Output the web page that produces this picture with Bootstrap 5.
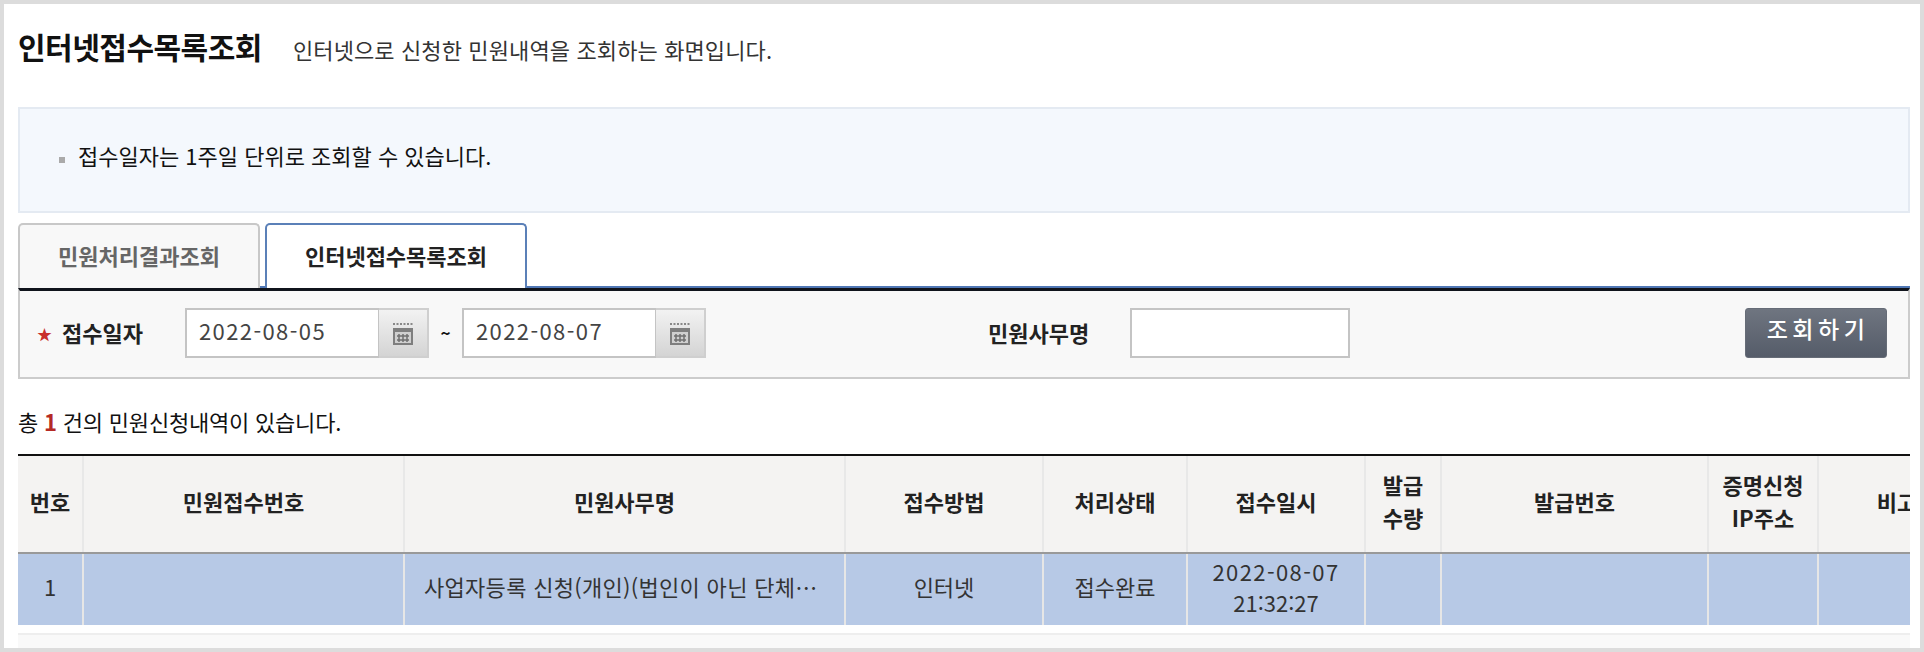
<!DOCTYPE html>
<html lang="ko">
<head>
    <meta charset="UTF-8">
    <title>인터넷접수목록조회</title>
    <link href="https://cdn.jsdelivr.net/npm/bootstrap@5.3.0/dist/css/bootstrap.min.css" rel="stylesheet">
    <style>
        html, body { height: 100%; }
        body {
            background: #fff;
            font-family: "Noto Sans CJK KR", "Noto Sans", sans-serif;
            color: #222;
            overflow: hidden;
        }
        .frame {
            height: 652px;
            border: 4px solid #dcdcdc;
            padding: 0 10px 0 14px;
            overflow: hidden;
        }
        .page-head { height: 103px; padding-top: 22px; }
        .page-title { font-size: 30px; font-weight: 700; letter-spacing: -0.5px; color: #111; margin: 0 31px 0 0; line-height: 40px; }
        .page-desc { font-size: 22px; letter-spacing: 0.12px; color: #333; }
        .notice {
            height: 106px;
            background: #f4f8fd;
            border: 2px solid #e4eaf2;
            padding: 0 0 9px 39px;
            font-size: 22px;
            color: #111;
        }
        .notice-dot { width: 6px; height: 6px; background: #aaa; margin: 8px 13px 0 0; }
        .tab-bar { margin-top: 10px; height: 65px; gap: 5px; border-bottom: 2px solid #4f77b5; }
        .tab-bar .nav-link {
            width: 242px; height: 65px; padding: 0 0 3px;
            display: flex; align-items: center; justify-content: center;
            background: #f8f8f8;
            border: 2px solid #c8c8c8;
            border-bottom: 0;
            border-radius: 5px 5px 0 0;
            font-size: 22px; font-weight: 700;
            color: #666;
        }
        .tab-bar .nav-link.active {
            width: 262px;
            background: #fff;
            border-color: #5b80b8;
            color: #222;
        }
        .search-box {
            height: 91px;
            background: #f8f8f8;
            border: 2px solid #ccc;
            border-top: 3px solid #10141c;
            padding: 0 21px 2px 17px;
        }
        .req-star { color: #c9302c; font-size: 15px; width: 23px; padding-right: 8px; text-align: right; line-height: 1; }
        .search-label { font-size: 22px; font-weight: 700; color: #222; padding-bottom: 2px; }
        .date-label { width: 125px; padding-left: 2px; }
        .name-label { margin-left: 282px; width: 142px; }
        .date-input.form-control, .name-input.form-control {
            height: 50px; border: 2px solid #c4c4c4; border-radius: 0;
            font-family: "Noto Sans CJK KR", sans-serif;
            font-size: 22px; letter-spacing: 1.4px; color: #444; padding: 0 12px 6px; background: #fff;
        }
        .date-input.form-control { width: 194px; border-right-width: 1px; }
        .name-input.form-control { width: 220px; }
        .cal-btn.btn {
            width: 50px; height: 50px; padding: 0;
            border: 2px solid #cfcfcf; border-left: 0; border-radius: 0;
            background: linear-gradient(#f2f2f2, #d4d4d4);
        }
        .tilde { width: 33px; text-align: center; font-size: 17px; font-weight: 700; color: #111; }
        .search-btn.btn {
            width: 142px; height: 50px; padding: 0 0 10px 4px;
            background: linear-gradient(#6f7580, #555c69);
            border: 1px solid #666c77; border-radius: 3px;
            color: #fff; font-size: 23px; font-weight: 500; letter-spacing: 4.5px;
        }
        .total-line { margin: 25px 0 16px; height: 34px; line-height: 34px; font-size: 22px; letter-spacing: -0.2px; color: #111; }
        .total-line b { color: #b52a25; }
        .grid-wrap { overflow: hidden; border-top: 2px solid #111; }
        .grid-table.table { table-layout: fixed; width: 1958px; margin: 0; font-size: 22px; }
        .grid-table.table th, .grid-table.table td {
            text-align: center; vertical-align: middle; padding: 0 0 6px;
        }
        .grid-table.table th {
            height: 97px; line-height: 33px;
            background: #f4f3f2; color: #222; font-weight: 700;
            border: 0; border-right: 2px solid #e8e8e8; border-bottom: 2px solid #999;
        }
        .grid-table.table td {
            height: 72px; line-height: 31px;
            background: #b7c9e6; color: #333;
            border: 0; border-right: 2px solid #e6e6e6;
            box-shadow: none;
        }
        .grid-table.table td.subject { text-align: left; padding: 0 0 6px 19px; letter-spacing: 0.3px; white-space: nowrap; overflow: hidden; }
        .date-part { letter-spacing: 1.4px; }
        .scroll-strip { margin-top: 8px; height: 16px; background: #f9f9f9; border-top: 2px solid #eee; }
    </style>
</head>
<body>
<div class="frame">
    <!-- 제목 -->
    <div class="page-head d-flex align-items-baseline">
        <h1 class="page-title">인터넷접수목록조회</h1>
        <span class="page-desc">인터넷으로 신청한 민원내역을 조회하는 화면입니다.</span>
    </div>

    <!-- 안내 -->
    <div class="notice d-flex align-items-center">
        <span class="notice-dot"></span>
        <span>접수일자는 1주일 단위로 조회할 수 있습니다.</span>
    </div>

    <!-- 탭 -->
    <ul class="nav tab-bar">
        <li class="nav-item"><a class="nav-link" href="#">민원처리결과조회</a></li>
        <li class="nav-item"><a class="nav-link active" href="#">인터넷접수목록조회</a></li>
    </ul>

    <!-- 검색 -->
    <form class="search-box d-flex align-items-center">
        <span class="req-star">★</span>
        <label class="search-label date-label">접수일자</label>
        <input class="form-control date-input" type="text" value="2022-08-05">
        <button type="button" class="btn cal-btn" aria-label="달력">
            <svg width="24" height="24" viewBox="0 0 24 24"><path d="M2 2h2M5.500 2h2M9 2h2M12.500 2h2M16 2h2M19.500 2h2" stroke="#888" stroke-width="2"/><rect x="2" y="6" width="20" height="17" fill="#7e7e7e"/><rect x="4" y="10" width="16" height="11" fill="#cfcfcf"/><path d="M6 14h12M6 18h12M8 12v8M12 12v8M16 12v8" stroke="#707070" stroke-width="1.500"/></svg>
        </button>
        <span class="tilde">~</span>
        <input class="form-control date-input" type="text" value="2022-08-07">
        <button type="button" class="btn cal-btn" aria-label="달력">
            <svg width="24" height="24" viewBox="0 0 24 24"><path d="M2 2h2M5.500 2h2M9 2h2M12.500 2h2M16 2h2M19.500 2h2" stroke="#888" stroke-width="2"/><rect x="2" y="6" width="20" height="17" fill="#7e7e7e"/><rect x="4" y="10" width="16" height="11" fill="#cfcfcf"/><path d="M6 14h12M6 18h12M8 12v8M12 12v8M16 12v8" stroke="#707070" stroke-width="1.500"/></svg>
        </button>
        <label class="search-label name-label">민원사무명</label>
        <input class="form-control name-input" type="text">
        <button type="button" class="btn search-btn ms-auto">조회하기</button>
    </form>

    <p class="total-line">총 <b>1</b> 건의 민원신청내역이 있습니다.</p>

    <!-- 목록 -->
    <div class="grid-wrap">
        <table class="table grid-table">
            <colgroup id="gridCols"></colgroup>
            <thead>
            <tr>
                <th>번호</th>
                <th>민원접수번호</th>
                <th>민원사무명</th>
                <th>접수방법</th>
                <th>처리상태</th>
                <th>접수일시</th>
                <th>발급<br>수량</th>
                <th>발급번호</th>
                <th>증명신청<br>IP주소</th>
                <th>비고</th>
            </tr>
            </thead>
            <tbody>
            <tr>
                <td>1</td>
                <td></td>
                <td class="subject">사업자등록 신청(개인)(법인이 아닌 단체…</td>
                <td>인터넷</td>
                <td>접수완료</td>
                <td><span class="date-part">2022-08-07</span><br>21:32:27</td>
                <td></td>
                <td></td>
                <td></td>
                <td></td>
            </tr>
            </tbody>
        </table>
    </div>
    <div class="scroll-strip"></div>
</div>

<script src="https://cdn.jsdelivr.net/npm/bootstrap@5.3.0/dist/js/bootstrap.bundle.min.js"></script>
<script>
    // 컬럼 너비
    const widths = [65, 321, 441, 198, 144, 178, 76, 267, 110, 158];
    const cols = document.getElementById('gridCols');
    widths.forEach(w => {
        const col = document.createElement('col');
        col.style.width = w + 'px';
        cols.appendChild(col);
    });
</script>
</body>
</html>
